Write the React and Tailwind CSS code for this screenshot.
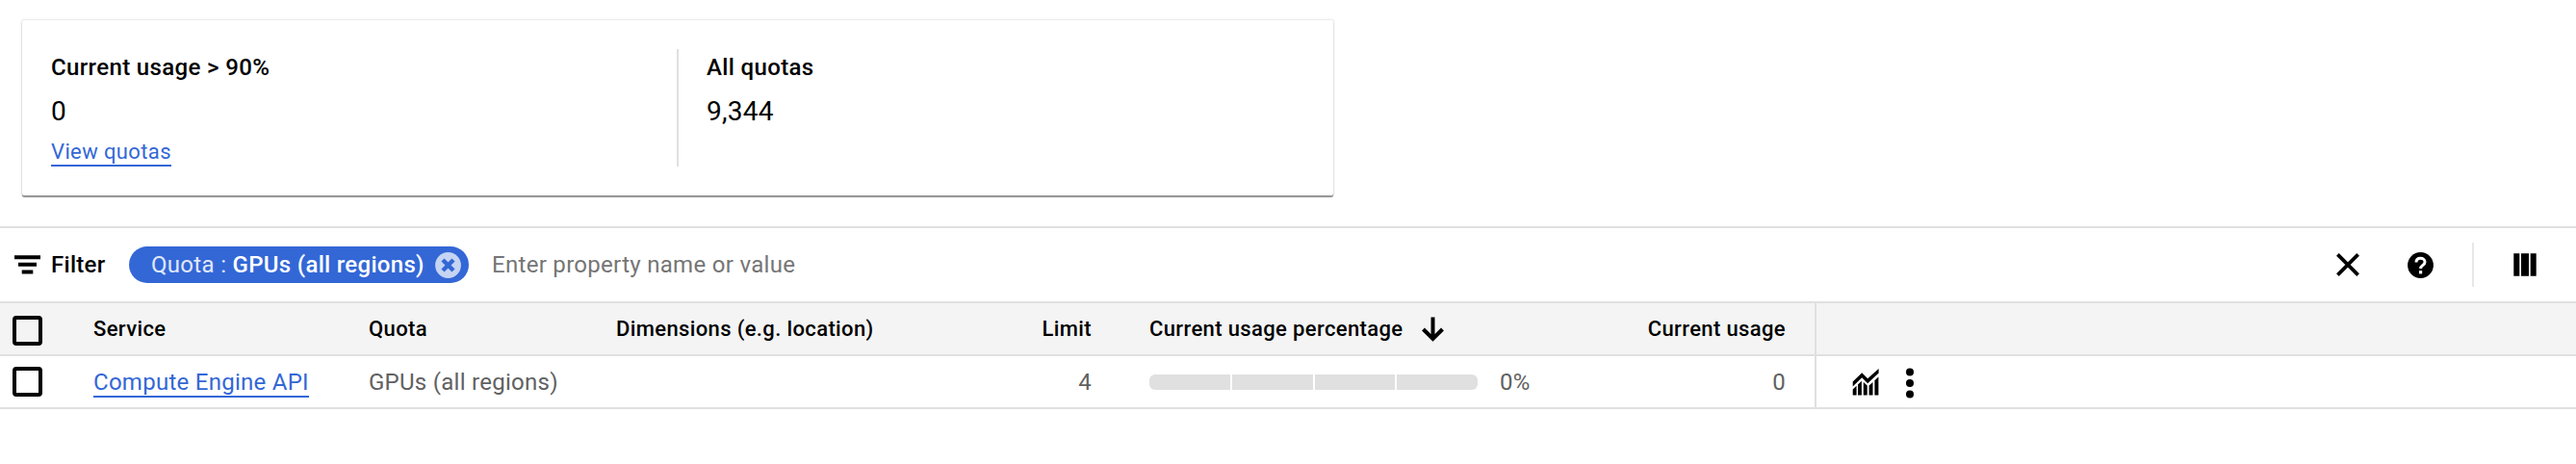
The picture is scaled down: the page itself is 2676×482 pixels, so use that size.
import React from 'react';

const columns = [
  { label: 'Service', className: 'w-[286px]' },
  { label: 'Quota', className: 'w-[257px]' },
  { label: 'Dimensions (e.g. location)', className: 'w-[340px]' },
];

function Checkbox() {
  return <span className="block w-[31px] h-[31px] ml-[13px] mr-[53px] shrink-0 border-4 border-black rounded-[4px]" />;
}

function FilterIcon() {
  return (
    <svg className="w-[27px] h-[20px]" viewBox="0 0 27 20">
      <path d="M0 0.2h27v4H0zM4 7.8h19v4H4zM7.7 15.4h11.6v4H7.7z" />
    </svg>
  );
}

function ChipCloseIcon() {
  return (
    <svg className="w-[27px] h-[27px]" viewBox="0 0 27 27">
      <circle cx="13.5" cy="13.5" r="13.4" fill="#c5d4f3" />
      <path d="M8 8l11 11M19 8L8 19" stroke="#3367d6" strokeWidth="4.4" />
    </svg>
  );
}

function CloseIcon() {
  return (
    <svg className="w-6 h-6" viewBox="0 0 24 24">
      <path d="M1.4 1.4l21.2 21.2M22.6 1.4L1.4 22.6" stroke="#000" strokeWidth="3.8" />
    </svg>
  );
}

function HelpIcon() {
  return (
    <svg className="w-[27px] h-[27px]" viewBox="0 0 27 27">
      <circle cx="13.5" cy="13.5" r="13.4" />
      <path d="M9 10.4c0-2.8 2-4.1 4.5-4.1s4.5 1.5 4.5 3.9c0 3.3-4.4 3.1-4.4 6.9" fill="none" stroke="#fff" strokeWidth="3" />
      <path d="M12 19.2h3.2v3.2H12z" fill="#fff" />
    </svg>
  );
}

function ColumnsIcon() {
  return (
    <svg className="w-6 h-6" viewBox="0 0 24 24">
      <path d="M0.3 0.3h6v23.4h-6zM8 0.3h8v23.4H8zM17.7 0.3h6v23.4h-6z" />
    </svg>
  );
}

function ArrowDownIcon() {
  return (
    <svg className="w-[23px] h-[26px]" viewBox="0 0 23 26">
      <path d="M11.5 0.5v22M1.5 13l10 10 10-10" fill="none" stroke="#000" strokeWidth="4" />
    </svg>
  );
}

function ChartIcon() {
  return (
    <svg className="w-7 h-7" viewBox="0 0 28 28">
      <path d="M0.7 13.4v5L10.2 9.3l6 6L27.6 4.6V0L16.2 10.2l-6-6z" />
      <path d="M0.7 21.4l3.9-3.7V27.4H0.7zM6 16.4l3.9-3.6V27.4H6zM11.8 14l3.9 3.6v9.8h-3.9zM17.6 17.4l3.9-3.4v13.4h-3.9zM23.4 12.2l4-3.6v18.800h-4z" />
    </svg>
  );
}

function MoreIcon() {
  return (
    <svg className="w-2 h-8" viewBox="0 0 8 32">
      <circle cx="4" cy="4.5" r="4" />
      <circle cx="4" cy="16" r="4" />
      <circle cx="4" cy="27.5" r="4" />
    </svg>
  );
}

function UsageBar() {
  return (
    <div className="flex gap-[2px] shrink-0 w-[341px] h-[16px] rounded-[6px] overflow-hidden">
      {[0, 1, 2, 3].map((part) => (
        <span key={part} className="flex-1 bg-[#e0e0e0]" />
      ))}
    </div>
  );
}

export default function App() {
  return (
    <div className="h-[482px] overflow-hidden bg-white text-black font-[Roboto,sans-serif] tracking-[0.27px]">
      <div className="h-[235px] pt-[21px] pl-[23px]">
        <div className="flex w-[1362px] h-[182px] pt-[30px] pl-[30px] rounded-[2px] shadow-[0_2px_1px_0_rgba(0,0,0,0.4),0_0_2px_1px_rgba(0,0,0,0.1)]">
          <div className="w-[652px] h-[122px] border-r-2 border-[#e0e0e0]">
            <div className="text-[24px] leading-[38px] font-medium tracking-[0.36px]">Current usage &gt; 90%</div>
            <div className="pt-px text-[28px] leading-[52px]">0</div>
            <a className="inline-block h-[31px] text-[22px] leading-[31px] tracking-[0.38px] text-[#3367d6] border-b-2 border-[#3367d6]">View quotas</a>
          </div>
          <div className="pl-[29px]">
            <div className="text-[24px] leading-[38px] font-medium tracking-[0.36px]">All quotas</div>
            <div className="pt-px text-[28px] leading-[52px]">9,344</div>
          </div>
        </div>
      </div>

      <div className="flex items-center h-[80px] border-y-2 border-[#e0e0e0] pl-[15px] pr-[41px]">
        <FilterIcon />
        <span className="w-[92px] pl-[11px] text-[24px] font-medium">Filter</span>
        <div className="flex items-center justify-between w-[353px] h-[38px] pl-[23px] pr-2 rounded-full bg-[#3367d6] text-white text-[24px] tracking-[0.31px] whitespace-nowrap">
          <span><span className="text-[#e0e8f9]">Quota : </span><span className="font-medium">GPUs (all regions)</span></span>
          <ChipCloseIcon />
        </div>
        <span className="ml-6 text-[24px] tracking-[0.3px] text-[#757575]">Enter property name or value</span>
        <div className="ml-auto flex items-center">
          <CloseIcon />
          <span className="ml-[50px]"><HelpIcon /></span>
          <span className="w-[2px] h-[46px] ml-10 mr-[41px] bg-[#e8e8e8]" />
          <ColumnsIcon />
        </div>
      </div>

      <div className="flex items-center h-[55px] border-b-2 border-[#e0e0e0] bg-[#f4f4f4] text-[22px] font-medium tracking-[0.37px] whitespace-nowrap">
        <div className="pt-[3px]"><Checkbox /></div>
        {columns.map((column) => (
          <span key={column.label} className={column.className}>{column.label}</span>
        ))}
        <span className="w-[154px] text-right">Limit</span>
        <span className="flex items-center gap-5 w-[400px] pl-[60px]">Current usage percentage <ArrowDownIcon /></span>
        <span className="w-[321px] text-right">Current usage</span>
        <span className="w-[2px] h-[53px] ml-[30px] bg-[#e0e0e0]" />
      </div>

      <div className="flex items-center h-[55px] border-b-2 border-[#e0e0e0] text-[24px] text-[#616161] whitespace-nowrap">
        <Checkbox />
        <span className="w-[286px]">
          <a className="inline-block h-[31px] text-[#3367d6] border-b-2 border-[#3367d6] leading-[31px]">Compute Engine API</a>
        </span>
        <span className="w-[597px]">GPUs (all regions)</span>
        <span className="w-[154px] text-right">4</span>
        <span className="flex items-center gap-[23px] w-[480px] pl-[60px]"><UsageBar />0%</span>
        <span className="w-[241px] text-right">0</span>
        <span className="w-[2px] h-[53px] ml-[30px] bg-[#e0e0e0]" />
        <span className="ml-[37px]"><ChartIcon /></span>
        <span className="ml-7 pt-[2px]"><MoreIcon /></span>
      </div>
    </div>
  );
}
